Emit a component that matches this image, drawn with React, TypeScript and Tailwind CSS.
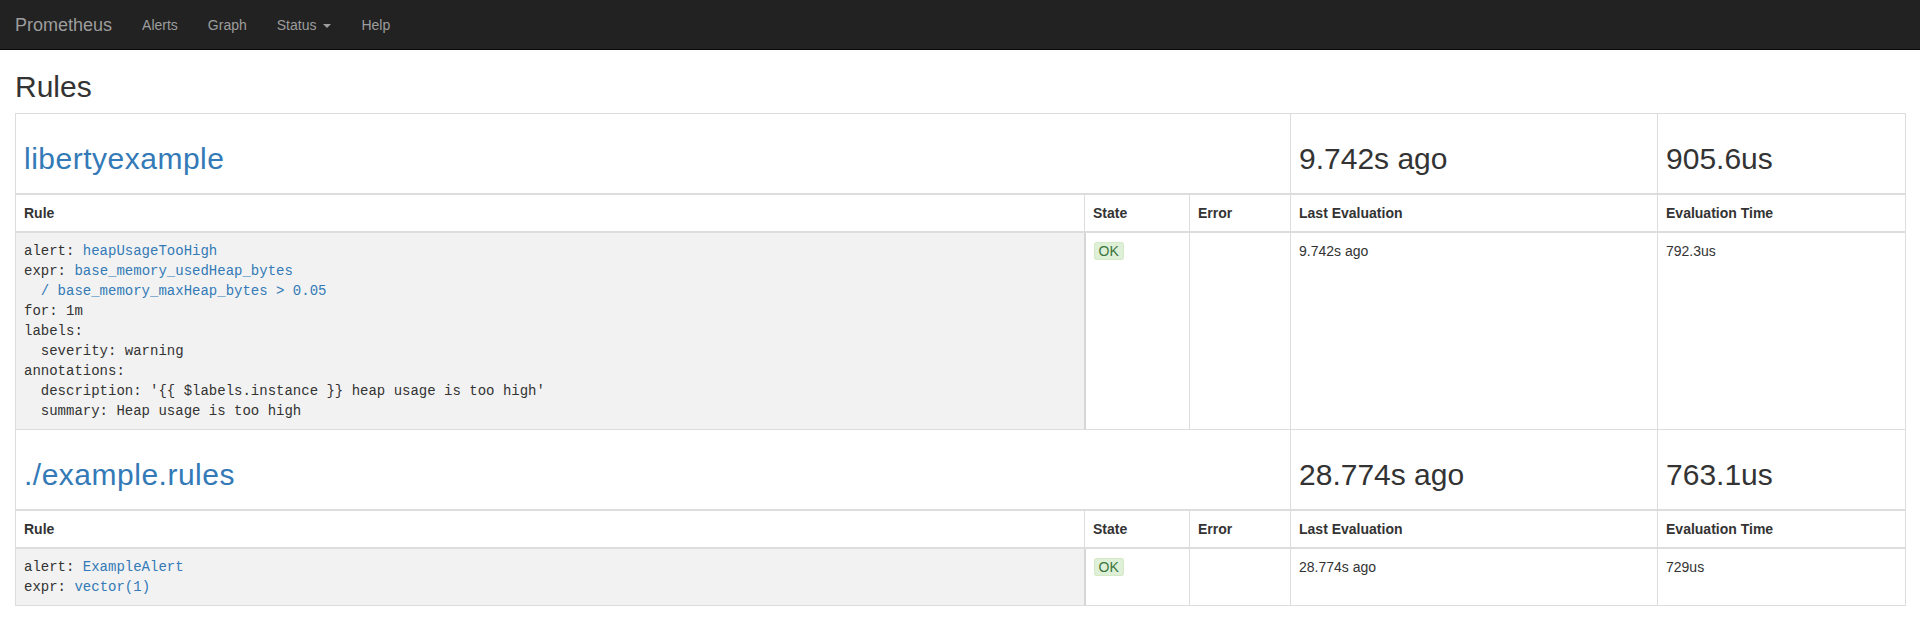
import React from "react";

const sans = { fontFamily: '"Liberation Sans", Arial, sans-serif' };

function Caret() {
  return (
    <span className="ml-[3px] inline-block h-0 w-0 align-middle border-t-[4px] border-t-[#9d9d9d] border-x-[4px] border-x-transparent" />
  );
}

function Link({ children }: { children: React.ReactNode }) {
  return <span className="text-[#337ab7]">{children}</span>;
}

type Rule = {
  body: React.ReactNode;
  last: string;
  time: string;
};

type Group = {
  name: string;
  ago: string;
  dur: string;
  rules: Rule[];
};

const groups: Group[] = [
  {
    name: "libertyexample",
    ago: "9.742s ago",
    dur: "905.6us",
    rules: [
      {
        body: (
          <>
            {"alert: "}
            <Link>heapUsageTooHigh</Link>
            {"\nexpr: "}
            <Link>{"base_memory_usedHeap_bytes\n  / base_memory_maxHeap_bytes > 0.05"}</Link>
            {"\nfor: 1m\nlabels:\n  severity: warning\nannotations:\n  description: '{{ $labels.instance }} heap usage is too high'\n  summary: Heap usage is too high"}
          </>
        ),
        last: "9.742s ago",
        time: "792.3us",
      },
    ],
  },
  {
    name: "./example.rules",
    ago: "28.774s ago",
    dur: "763.1us",
    rules: [
      {
        body: (
          <>
            {"alert: "}
            <Link>ExampleAlert</Link>
            {"\nexpr: "}
            <Link>vector(1)</Link>
          </>
        ),
        last: "28.774s ago",
        time: "729us",
      },
    ],
  },
];

export default function App() {
  return (
    <div className="min-h-[633px] bg-white text-[14px] leading-[20px] text-[#333]" style={sans}>
      <nav className="flex h-[50px] items-start border-b border-[#080808] bg-[#222]">
        <span className="px-[15px] py-[15px] text-[18px] leading-[20px] text-[#9d9d9d]">Prometheus</span>
        <div className="flex">
          <span className="px-[15px] py-[15px] text-[#9d9d9d]">Alerts</span>
          <span className="px-[15px] py-[15px] text-[#9d9d9d]">Graph</span>
          <span className="px-[15px] py-[15px] text-[#9d9d9d]">
            Status <Caret />
          </span>
          <span className="px-[15px] py-[15px] text-[#9d9d9d]">Help</span>
        </div>
      </nav>

      <div className="px-[15px]">
        <h2 className="mt-[20px] mb-[10px] text-[30px] leading-[33px] font-medium text-[#333]">Rules</h2>

        <table className="w-full table-fixed border-collapse border border-[#ddd]">
          <colgroup>
            <col className="w-[1069px]" />
            <col className="w-[105px]" />
            <col className="w-[101px]" />
            <col className="w-[367px]" />
            <col className="w-[248px]" />
          </colgroup>
          {groups.map((g) => (
            <React.Fragment key={g.name}>
              <thead>
                <tr>
                  <td colSpan={3} className="border border-b-2 border-[#ddd] px-2 pt-[28px] pb-[18px] align-top">
                    <span className="text-[30px] leading-[33px] font-medium tracking-[0.5px] text-[#337ab7]">{g.name}</span>
                  </td>
                  <td className="border border-b-2 border-[#ddd] px-2 pt-[28px] pb-[18px] align-top">
                    <span className="text-[30px] leading-[33px] font-medium text-[#333]">{g.ago}</span>
                  </td>
                  <td className="border border-b-2 border-[#ddd] px-2 pt-[28px] pb-[18px] align-top">
                    <span className="text-[30px] leading-[33px] font-medium text-[#333]">{g.dur}</span>
                  </td>
                </tr>
              </thead>
              <tbody>
                <tr>
                  <td className="border border-b-2 border-[#ddd] p-2 font-bold">Rule</td>
                  <td className="border border-b-2 border-[#ddd] p-2 font-bold">State</td>
                  <td className="border border-b-2 border-[#ddd] p-2 font-bold">Error</td>
                  <td className="border border-b-2 border-[#ddd] p-2 font-bold">Last Evaluation</td>
                  <td className="border border-b-2 border-[#ddd] p-2 font-bold">Evaluation Time</td>
                </tr>
                {g.rules.map((r, i) => (
                  <tr key={i}>
                    <td
                      className="whitespace-pre border border-r-2 border-[#ddd] border-r-[#d6d6d6] bg-[#f2f2f2] p-2 align-top text-[14px] leading-[20px] text-[#333]"
                      style={{ fontFamily: '"Liberation Mono", "Courier New", monospace' }}
                    >
                      {r.body}
                    </td>
                    <td className="border border-[#ddd] p-2 align-top">
                      <span className="rounded-[3px] border border-[#d6e9c6] bg-[#dff0d8] px-1 text-[#3c763d]">OK</span>
                    </td>
                    <td className="border border-[#ddd] p-2 align-top"></td>
                    <td className="border border-[#ddd] p-2 align-top">{r.last}</td>
                    <td className="border border-[#ddd] p-2 align-top">{r.time}</td>
                  </tr>
                ))}
              </tbody>
            </React.Fragment>
          ))}
        </table>
      </div>
    </div>
  );
}
